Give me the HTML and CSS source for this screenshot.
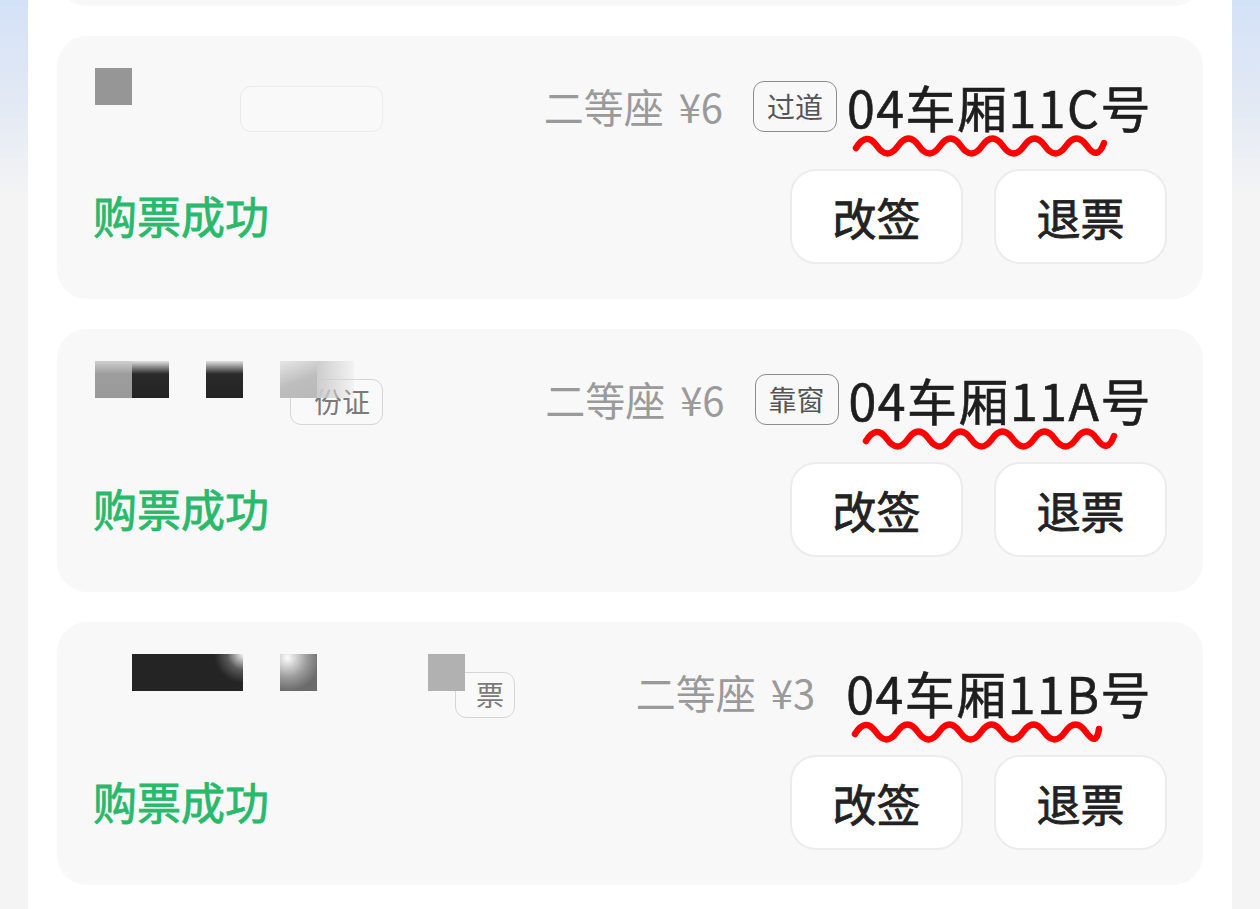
FILE: index.html
```html
<!DOCTYPE html>
<html lang="zh-CN">
<head>
  <meta charset="UTF-8">
  <meta name="viewport" content="width=device-width, initial-scale=1.0">
  <title>我的车票</title>
  <link rel="stylesheet" href="styles.css">
</head>
<body>
  <div class="panel">
    <div class="ticket-list">

      <!-- earlier ticket, scrolled out of view -->
      <div class="ticket ticket-prev"></div>

      <div class="ticket">
        <div class="ticket-top">
          <div class="passenger">
            <span class="id-tag tag-wide"></span>
            <div class="mosaic">
              <span class="cell mid"></span>
            </div>
          </div>
          <div class="seat-info">
            <span class="seat-class">二等座 ¥6</span>
            <span class="seat-pos">过道</span>
            <span class="seat-no">04车厢11C号
              <svg class="squiggle" viewBox="0 0 256 22"><path d="M4 13 Q14.5 -4 25 11 T46 11 T67 11 T88 11 T109 11 T130 11 T151 11 T172 11 T193 11 T214 11 T235 11 T252 8"/></svg>
            </span>
          </div>
        </div>
        <div class="ticket-bottom">
          <span class="status">购票成功</span>
          <div class="actions">
            <button class="action-btn">改签</button>
            <button class="action-btn">退票</button>
          </div>
        </div>
      </div>

      <div class="ticket">
        <div class="ticket-top">
          <div class="passenger">
            <span class="id-tag tag-doc">份证</span>
            <div class="mosaic">
              <span class="cell mid fade-top"></span>
              <span class="cell dark fade-top"></span>
              <span class="cell"></span>
              <span class="cell dark fade-top"></span>
              <span class="cell"></span>
              <span class="cell light"></span>
              <span class="cell fade-right"></span>
            </div>
          </div>
          <div class="seat-info">
            <span class="seat-class">二等座 ¥6</span>
            <span class="seat-pos">靠窗</span>
            <span class="seat-no">04车厢11A号
              <svg class="squiggle shift" viewBox="0 0 256 22"><path d="M4 13 Q14.5 -4 25 11 T46 11 T67 11 T88 11 T109 11 T130 11 T151 11 T172 11 T193 11 T214 11 T235 11 T252 8"/></svg>
            </span>
          </div>
        </div>
        <div class="ticket-bottom">
          <span class="status">购票成功</span>
          <div class="actions">
            <button class="action-btn">改签</button>
            <button class="action-btn">退票</button>
          </div>
        </div>
      </div>

      <div class="ticket">
        <div class="ticket-top">
          <div class="passenger">
            <span class="id-tag tag-short">票</span>
            <div class="mosaic">
              <span class="cell"></span>
              <span class="cell dark"></span>
              <span class="cell dark"></span>
              <span class="cell dark glow"></span>
              <span class="cell"></span>
              <span class="cell smoke"></span>
              <span class="cell"></span>
              <span class="cell"></span>
              <span class="cell"></span>
              <span class="cell pale"></span>
            </div>
          </div>
          <div class="seat-info">
            <span class="seat-class">二等座 ¥3</span>
            <span class="seat-no">04车厢11B号
              <svg class="squiggle" viewBox="0 0 256 22"><path d="M4 13 Q14.5 -4 25 11 T46 11 T67 11 T88 11 T109 11 T130 11 T151 11 T172 11 T193 11 T214 11 T235 11 T248 8"/></svg>
            </span>
          </div>
        </div>
        <div class="ticket-bottom">
          <span class="status">购票成功</span>
          <div class="actions">
            <button class="action-btn">改签</button>
            <button class="action-btn">退票</button>
          </div>
        </div>
      </div>

    </div>
  </div>
</body>
</html>
```

FILE: styles.css
```css
html, body {
  height: 100%;
}
body {
  margin: 0;
  overflow: hidden;
  font-family: "Noto Sans CJK SC", "Noto Sans", sans-serif;
  background: linear-gradient(180deg, #d3e1f7 0, #e4eaf4 110px, #f4f4f4 200px, #f4f4f4 100%);
}

.panel {
  margin: 0 28px;
  padding: 0 29px;
  min-height: 100%;
  background-color: #fff;
  overflow: hidden;
}

.ticket-list {
  display: flex;
  flex-direction: column;
  gap: 30px;
  margin-top: -257px;
}

/* Ticket card */
.ticket {
  background-color: #f8f8f8;
  border-radius: 30px;
  padding: 30px 36px 35px;
}
.ticket-prev {
  height: 263px;
  box-sizing: border-box;
}
.ticket-top {
  display: flex;
  align-items: center;
  height: 86px;
}
.passenger {
  flex: 1;
  align-self: stretch;
  position: relative;
}
.mosaic {
  display: flex;
  margin: 2px 0 0 2px;
  position: relative;
}
.cell {
  width: 37px;
  height: 37px;
  flex: none;
}
.cell.mid { background-color: #969696; }
.cell.dark { background-color: #242424; }
.cell.pale { background-color: #b1b1b1; }
.cell.light { background: linear-gradient(160deg, #e6e6e6 0, #bdbdbd 55%, #b9b9b9 100%); }
.cell.fade-top.mid { background: linear-gradient(180deg, #cfcfcf 0, #9d9d9d 35%, #9a9a9a 100%); }
.cell.fade-top.dark { background: linear-gradient(180deg, #e0e0e0 0, #2a2a2a 35%, #232323 100%); }
.cell.fade-right { background: linear-gradient(90deg, #cdcdcd 0, rgba(220, 220, 220, 0.2) 100%); }
.cell.glow { background: radial-gradient(circle at 100% 0, #f6f6f6 0, #5a5a5a 30%, #242424 55%); }
.cell.smoke { background: radial-gradient(circle at 20% 10%, #fdfdfd 0, #9a9a9a 45%, #6b6b6b 75%); }

/* ID type chip sitting under the name */
.id-tag {
  position: absolute;
  top: 20px;
  height: 46px;
  box-sizing: border-box;
  border: 1.5px solid #d6d6d6;
  border-radius: 11px;
  background-color: #f9f9f9;
  color: #7a7a7a;
  font-size: 28px;
  line-height: 43px;
  text-align: right;
  padding-right: 12px;
}
.tag-wide {
  left: 147px;
  width: 143px;
  border-color: #ebebeb;
}
.tag-doc {
  left: 197px;
  width: 93px;
}
.tag-short {
  left: 362px;
  width: 60px;
  padding-right: 10px;
}

/* Seat details */
.seat-info {
  display: flex;
  align-items: center;
  padding-right: 15px;
  margin-top: -6px;
}
.seat-class {
  font-size: 40px;
  color: #9a9a9a;
  word-spacing: 6px;
}
.seat-pos {
  margin-left: 30px;
  height: 51px;
  box-sizing: border-box;
  padding: 0 13px;
  border: 1.5px solid #8c8c8c;
  border-radius: 11px;
  font-size: 28px;
  line-height: 48px;
  color: #555;
}
.seat-no {
  position: relative;
  margin-left: 10px;
  font-size: 50px;
  line-height: 56px;
  letter-spacing: 1.5px;
  color: #1e1e1e;
  -webkit-text-stroke: 0.6px currentColor;
}
.seat-class + .seat-no {
  margin-left: 31px;
}
.squiggle {
  position: absolute;
  left: 5px;
  top: 57px;
  width: 256px;
  height: 22px;
  overflow: visible;
}
.squiggle.shift {
  left: 13px;
}
.squiggle path {
  fill: none;
  stroke: #f00;
  stroke-width: 6.5;
  stroke-linecap: round;
  stroke-linejoin: round;
}

/* Status + actions */
.ticket-bottom {
  display: flex;
  justify-content: space-between;
  align-items: center;
  margin-top: 17px;
}
.status {
  font-size: 44px;
  line-height: 60px;
  margin-top: -4px;
  color: #29b96b;
  -webkit-text-stroke: 0.8px currentColor;
}
.actions {
  display: flex;
  gap: 31px;
}
.action-btn {
  width: 173px;
  height: 95px;
  border: 2px solid #ececec;
  border-radius: 26px;
  background-color: #fff;
  font-family: inherit;
  font-size: 44px;
  color: #222;
  -webkit-text-stroke: 0.8px currentColor;
  cursor: pointer;
}
```
